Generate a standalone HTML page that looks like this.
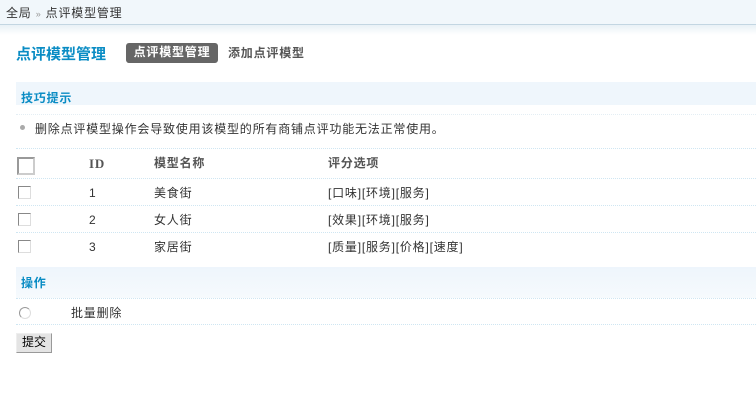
<!DOCTYPE html><html><head><meta charset="utf-8"><style>
body{margin:0;width:756px;height:405px;background:#fff;font:12px "Liberation Sans","Noto Sans CJK SC",sans-serif;color:#333;position:relative;overflow:hidden;letter-spacing:0.8px}
.a{position:absolute;white-space:nowrap}
.dl{position:absolute;left:16px;right:0;border-top:1px dotted #cfe6f2;height:0}
.cb{position:absolute;width:11px;height:11px;border:1px solid #888;border-right-color:#ddd;border-bottom-color:#ddd;background:#fff}
</style></head><body>
<div class="a" style="left:0;top:0;width:756px;height:24px;background:#f1f7fb;border-bottom:1px solid #c3d6e2"></div>
<div class="a" style="left:0;top:25px;width:756px;height:10px;background:linear-gradient(#e9f1f6,#fff)"></div>
<div class="a" style="left:6px;top:4px;color:#333">全局 <span style="color:#999;font-size:9px">»</span> 点评模型管理</div>
<div class="a" style="left:16px;top:43px;font-size:15px;font-weight:bold;color:#0a8cc4;letter-spacing:0">点评模型管理</div>
<div class="a" style="left:126px;top:43px;width:92px;height:20px;background:#666;border-radius:3px;color:#fff;font-weight:bold;text-align:center;line-height:19px">点评模型管理</div>
<div class="a" style="left:228px;top:44px;font-weight:bold;color:#555">添加点评模型</div>
<div class="a" style="left:16px;top:82px;width:740px;height:23px;background:#eff6fc"></div>
<div class="a" style="left:21px;top:89px;font-weight:bold;color:#0a8cc4">技巧提示</div>
<div class="dl" style="top:114px;border-color:#e4eef4"></div>
<div class="a" style="left:20px;top:125px;width:5px;height:5px;border-radius:50%;background:#aaa"></div>
<div class="a" style="left:35px;top:120px">删除点评模型操作会导致使用该模型的所有商铺点评功能无法正常使用。</div>
<div class="dl" style="top:148px"></div>
<div class="cb" style="left:17px;top:157px;width:14px;height:14px;border:2px solid #999;border-right-color:#ccc;border-bottom-color:#ccc"></div>
<div class="a" style="left:89px;top:156px;font-family:'Liberation Serif',serif;font-size:13px;font-weight:bold;color:#555">ID</div>
<div class="a" style="left:154px;top:154px;font-weight:bold;color:#555">模型名称</div>
<div class="a" style="left:328px;top:154px;font-weight:bold;color:#555">评分选项</div>
<div class="dl" style="top:178px"></div>
<div class="cb" style="left:18px;top:186px"></div><div class="a" style="left:89px;top:186px">1</div><div class="a" style="left:154px;top:184px">美食街</div><div class="a" style="left:328px;top:184px">[口味][环境][服务]</div>
<div class="dl" style="top:205px"></div>
<div class="cb" style="left:18px;top:213px"></div><div class="a" style="left:89px;top:213px">2</div><div class="a" style="left:154px;top:211px">女人街</div><div class="a" style="left:328px;top:211px">[效果][环境][服务]</div>
<div class="dl" style="top:232px"></div>
<div class="cb" style="left:18px;top:240px"></div><div class="a" style="left:89px;top:240px">3</div><div class="a" style="left:154px;top:238px">家居街</div><div class="a" style="left:328px;top:238px">[质量][服务][价格][速度]</div>
<div class="a" style="left:16px;top:267px;width:740px;height:31px;background:linear-gradient(#eef5fc,#f6fafd)"></div>
<div class="a" style="left:21px;top:274px;font-weight:bold;color:#0a8cc4">操作</div>
<div class="dl" style="top:298px"></div>
<div class="a" style="left:19px;top:307px;width:10px;height:10px;border-radius:50%;border:1px solid #999;border-right-color:#ddd;border-bottom-color:#ddd"></div>
<div class="a" style="left:71px;top:304px">批量删除</div>
<div class="dl" style="top:324px"></div>
<div class="a" style="left:16px;top:333px;width:34px;height:18px;background:#e4e4e4;border:1px solid #999;border-top-color:#eee;border-left-color:#eee;text-align:center;line-height:17px;color:#000;letter-spacing:0">提交</div>
</body></html>
